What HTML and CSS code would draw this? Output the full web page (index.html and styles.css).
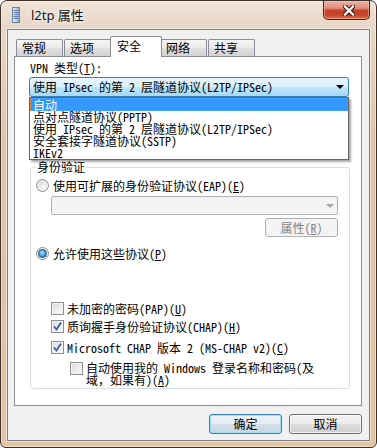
FILE: index.html
```html
<!DOCTYPE html>
<html lang="zh-CN">
<head>
    <meta charset="UTF-8">
    <title>l2tp 属性</title>
    <link rel="stylesheet" href="styles.css">
</head>
<body>
    <div class="window">
        <!-- Title bar -->
        <div class="titlebar">
            <svg class="app-icon" width="8" height="16" viewBox="0 0 8 16">
                <defs>
                    <linearGradient id="tower" x1="0" y1="0" x2="1" y2="0">
                        <stop offset="0" stop-color="#f2f7fc"/>
                        <stop offset="1" stop-color="#8ea9c9"/>
                    </linearGradient>
                </defs>
                <rect x="0.5" y="0.5" width="7" height="15" fill="url(#tower)" stroke="#6a82a3"/>
                <path d="M1.5 3.5h5M1.5 5.5h5M1.5 7.5h5M1.5 9.5h5M1.5 11.5h5" stroke="#5f7da6" stroke-width="1"/>
            </svg>
            <span class="title">l2tp 属性</span>
            <div class="close">
                <svg width="12" height="11" viewBox="0 0 12 11">
                    <path d="M2 1.5 L10 9.5 M10 1.5 L2 9.5" stroke="#3b1c16" stroke-width="4.6" stroke-linecap="square"/>
                    <path d="M2 1.5 L10 9.5 M10 1.5 L2 9.5" stroke="#fff" stroke-width="2.4" stroke-linecap="square"/>
                </svg>
            </div>
        </div>

        <div class="client">
            <div class="tabs">
                <div class="tab">常规</div>
                <div class="tab">选项</div>
                <div class="tab active">安全</div>
                <div class="tab">网络</div>
                <div class="tab">共享</div>
            </div>

            <div class="panel">
                <div class="field-label">VPN 类型(<u>T</u>):</div>
                <div class="combo-wrap">
                    <div class="combo">
                        <span>使用 IPsec 的第 2 层隧道协议(L2TP/IPSec)</span>
                        <span class="arrow"></span>
                    </div>
                    <ul class="dropdown">
                        <li class="selected">自动</li>
                        <li>点对点隧道协议(PPTP)</li>
                        <li>使用 IPsec 的第 2 层隧道协议(L2TP/IPSec)</li>
                        <li>安全套接字隧道协议(SSTP)</li>
                        <li>IKEv2</li>
                    </ul>
                </div>

                <fieldset class="group">
                    <legend>身份验证</legend>

                    <div class="option first">
                        <span class="radio"></span>
                        <span>使用可扩展的身份验证协议(EAP)(<u>E</u>)</span>
                    </div>
                    <div class="select-disabled"><span class="arrow"></span></div>
                    <div class="btn-small">属性(<u>R</u>)</div>

                    <div class="option second">
                        <span class="radio checked"></span>
                        <span>允许使用这些协议(<u>P</u>)</span>
                    </div>

                    <div class="check-row pap">
                        <span class="check"></span>
                        <span>未加密的密码(PAP)(<u>U</u>)</span>
                    </div>
                    <div class="check-row chap">
                        <span class="check">
                            <svg width="11" height="11" viewBox="0 0 11 11"><path d="M2 5.5 L4.5 8.5 L9 1.5" fill="none" stroke="#3d5ca8" stroke-width="1.8"/></svg>
                        </span>
                        <span>质询握手身份验证协议(CHAP)(<u>H</u>)</span>
                    </div>
                    <div class="check-row mschap">
                        <span class="check">
                            <svg width="11" height="11" viewBox="0 0 11 11"><path d="M2 5.5 L4.5 8.5 L9 1.5" fill="none" stroke="#3d5ca8" stroke-width="1.8"/></svg>
                        </span>
                        <span>Microsoft CHAP 版本 2 (MS-CHAP v2)(<u>C</u>)</span>
                    </div>
                    <div class="check-row autologon">
                        <span class="check"></span>
                        <span class="wrap-label">自动使用我的 Windows 登录名称和密码(及域，如果有)(<u>A</u>)</span>
                    </div>
                </fieldset>
            </div>

            <div class="actions">
                <button class="btn default">确定</button>
                <button class="btn">取消</button>
            </div>
        </div>
    </div>
</body>
</html>
```

FILE: styles.css
```css
* {
    box-sizing: border-box;
}
html, body {
    margin: 0;
    padding: 0;
}
body {
    width: 377px;
    height: 448px;
    overflow: hidden;
    background: #fff;
    font-family: "Noto Sans Mono CJK SC", "Noto Sans CJK SC", monospace;
    font-size: 12px;
    line-height: 12px;
    color: #000;
}
u {
    text-decoration-thickness: 1px;
    text-underline-offset: 1px;
}

/* window frame */
.window {
    width: 377px;
    height: 448px;
    display: flex;
    flex-direction: column;
    padding: 0 6px 6px;
    border: 1px solid #3d3028;
    border-radius: 7px 7px 6px 6px;
    background: linear-gradient(180deg, #efe3d8 0, #e8d6c6 28px, #dfc4a8 140px, #e2c3a3 100%);
    box-shadow: inset 0 0 0 1px rgba(255, 255, 255, 0.45);
}
.titlebar {
    height: 28px;
    display: flex;
    align-items: center;
}
.app-icon {
    margin-left: 5px;
    margin-right: 11px;
}
.title {
    font-family: "Noto Sans", "Noto Sans CJK SC", sans-serif;
    font-size: 13px;
    line-height: 16px;
    color: #111;
    text-shadow: 0 0 6px #fff, 0 0 3px #fff;
}
.close {
    align-self: flex-start;
    margin-left: auto;
    width: 47px;
    height: 19px;
    display: flex;
    align-items: center;
    justify-content: center;
    padding-left: 4px;
    border: 1px solid #4a2418;
    border-top: none;
    border-radius: 0 0 5px 5px;
    background: linear-gradient(180deg, #eab1a4 0, #de8d7a 40%, #c8412a 52%, #c4442b 78%, #e2734f 100%);
    box-shadow: inset 0 0 0 1px rgba(255, 210, 190, 0.45);
}

/* client area */
.client {
    height: 412px;
    display: flex;
    flex-direction: column;
    border: 1px solid #7c7f86;
    background: #f0f0f0;
    box-shadow: 0 0 0 1px rgba(255, 255, 255, 0.5);
}
.tabs {
    display: flex;
    align-items: flex-end;
    margin: 6px 0 0 8px;
    position: relative;
    z-index: 1;
}
.tab {
    width: 47px;
    height: 17px;
    margin-right: 1px;
    padding: 2px 0 0 5px;
    border: 1px solid #898c95;
    border-bottom: none;
    border-radius: 2px 2px 0 0;
    background: linear-gradient(180deg, #f5f5f5 0, #ececec 45%, #dedede 55%, #d3d3d3 100%);
}
.tab.active {
    width: 52px;
    height: 21px;
    margin: 0 -2px -1px -2px;
    padding: 3px 0 0 6px;
    background: #fff;
    position: relative;
    z-index: 2;
}
.panel {
    height: 350px;
    margin: 0 7px 0 6px;
    border: 1px solid #898c95;
    background: #fff;
}
.field-label {
    margin: 5px 0 0 15px;
}
.combo-wrap {
    position: relative;
    width: 320px;
    margin: 3px 0 0 14px;
}
.combo {
    height: 20px;
    display: flex;
    align-items: center;
    padding-left: 3px;
    border: 1px solid #3c7fb1;
    border-radius: 3px;
    background: linear-gradient(180deg, #eaf6fd 0, #d9f0fc 50%, #bee6fd 50%, #a7d9f5 100%);
    white-space: nowrap;
}
.arrow {
    margin-left: auto;
    margin-right: 4px;
    width: 0;
    height: 0;
    border-left: 4px solid transparent;
    border-right: 4px solid transparent;
    border-top: 4px solid #000;
}
.dropdown {
    position: absolute;
    top: 20px;
    left: 0;
    width: 320px;
    margin: 0;
    padding: 0;
    list-style: none;
    background: #fff;
    border: 1px solid #646464;
    box-shadow: 2px 2px 2px rgba(0, 0, 0, 0.35);
    z-index: 3;
}
.dropdown li {
    height: 12px;
    padding-left: 3px;
    white-space: nowrap;
}
.dropdown li.selected {
    height: 13px;
    line-height: 11px;
    padding-left: 2px;
    background: #3399ff;
    color: #fff;
    border: 1px dotted #d98a3a;
}

/* authentication group */
.group {
    width: 320px;
    min-width: 0;
    margin: 64px 0 0 15px;
    padding: 0 0 2px;
    border: 1px solid #d5dfe5;
    border-radius: 3px;
}
.group legend {
    margin-left: 5px;
    padding: 0 1px;
    line-height: 12px;
}
.option {
    display: flex;
    align-items: center;
    height: 13px;
    margin-left: 5px;
    white-space: nowrap;
}
.option.first {
    margin-top: 6px;
}
.option.second {
    margin-top: 10px;
}
.radio {
    width: 13px;
    height: 13px;
    margin-right: 4px;
    border-radius: 50%;
    border: 1px solid #8e8f8f;
    background: radial-gradient(circle at 60% 65%, #fafafa 0, #e6e6e6 45%, #c9c9c9 100%);
    box-shadow: inset 0 0 0 1px rgba(255, 255, 255, 0.6);
    display: flex;
    align-items: center;
    justify-content: center;
}
.radio.checked::after {
    content: "";
    width: 7px;
    height: 7px;
    border-radius: 50%;
    border: 1px solid #1b4e86;
    background: radial-gradient(circle at 45% 40%, #bfeaff 0, #4fa7e3 45%, #155ea2 100%);
}
.select-disabled {
    width: 287px;
    height: 19px;
    margin: 4px 0 0 20px;
    display: flex;
    align-items: center;
    border: 1px solid #adb2b5;
    border-radius: 2px;
    background: #f4f4f4;
}
.select-disabled .arrow {
    margin-right: 3px;
    border-top-color: #a5a5a5;
}
.btn-small {
    width: 73px;
    height: 19px;
    margin: 3px 0 0 234px;
    padding-top: 3px;
    text-align: center;
    border: 1px solid #adb2b5;
    border-radius: 3px;
    background: #f4f4f4;
    color: #838383;
}
.check-row {
    display: flex;
    align-items: center;
    height: 13px;
    margin-left: 20px;
    white-space: nowrap;
}
.check-row.pap {
    margin-top: 42px;
}
.check-row.chap {
    margin-top: 5px;
}
.check-row.mschap {
    margin-top: 8px;
}
.check-row.autologon {
    margin: 8px 0 0 39px;
    height: auto;
    align-items: flex-start;
}
.check {
    flex: none;
    width: 13px;
    height: 13px;
    margin-right: 3px;
    border: 1px solid #8e8f8f;
    background: linear-gradient(135deg, #d4d4d4 0, #ececec 50%, #fbfbfb 100%);
    box-shadow: inset 0 0 0 1px #f4f4f4;
    display: flex;
    align-items: center;
    justify-content: center;
}
.wrap-label {
    width: 232px;
    white-space: normal;
}

/* bottom buttons */
.actions {
    display: flex;
    justify-content: flex-end;
    gap: 7px;
    margin: 8px 7px 0 0;
}
.btn {
    width: 73px;
    height: 20px;
    padding: 0;
    font: inherit;
    color: #000;
    border: 1px solid #707070;
    border-radius: 3px;
    background: linear-gradient(180deg, #f2f2f2 0, #ebebeb 50%, #dddddd 50%, #cfcfcf 100%);
    box-shadow: inset 0 0 0 1px rgba(255, 255, 255, 0.7);
}
.btn.default {
    border-color: #3c7fb1;
    background: linear-gradient(180deg, #eef4f8 0, #e4edf3 50%, #d5e0e8 50%, #c9d6e0 100%);
    box-shadow: inset 0 0 0 1px #9fdcf5;
}
```
